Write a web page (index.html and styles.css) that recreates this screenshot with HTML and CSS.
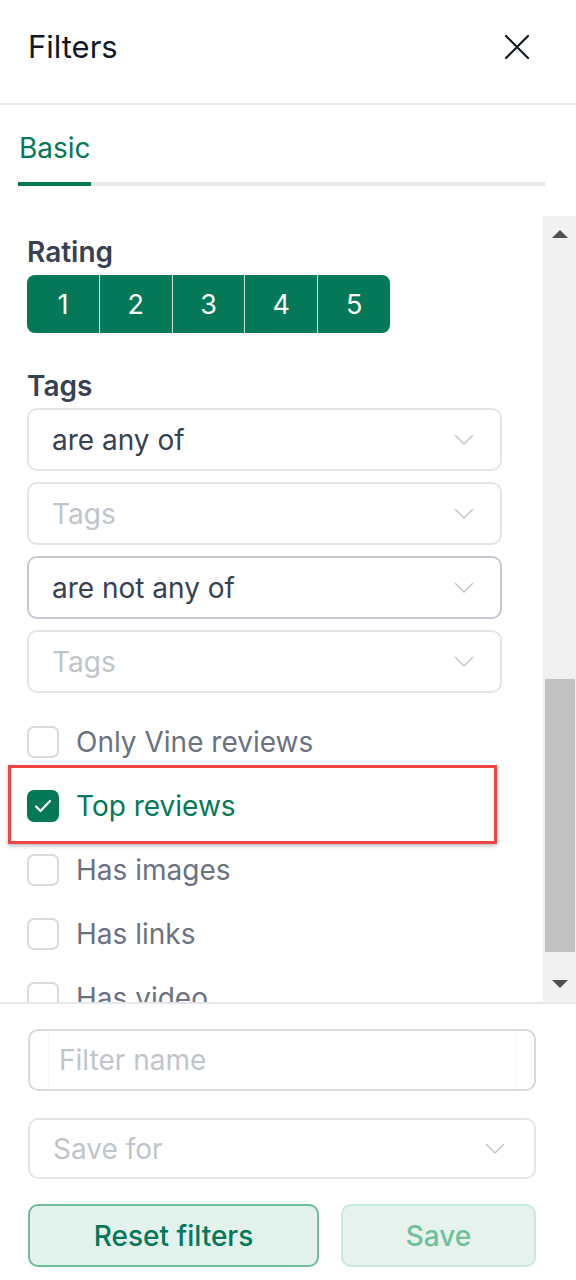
FILE: index.html
```html
<!DOCTYPE html>
<html lang="en">
<head>
<meta charset="utf-8">
<title>Filters</title>
<link rel="stylesheet" href="styles.css">
</head>
<body>
<div class="panel">
  <header class="header">
    <h1 class="title">Filters</h1>
    <svg class="close" width="26" height="26" viewBox="0 0 26 26"><path d="M2 2L24 24M24 2L2 24" stroke="#111827" stroke-width="2.2" fill="none" stroke-linecap="round"/></svg>
  </header>

  <nav class="tabs">
    <span class="tab">Basic</span>
  </nav>

  <div class="scroll-area">
    <div class="scroll-content">
      <div class="label">Rating</div>
      <div class="rating">
        <span class="rate">1</span><span class="rate">2</span><span class="rate">3</span><span class="rate">4</span><span class="rate">5</span>
      </div>

      <div class="label tags-label">Tags</div>
      <div class="selects">
        <div class="select"><span>are any of</span><svg class="chev" width="20" height="11" viewBox="0 0 20 11"><path d="M1 1L10 10L19 1" stroke="#c3c7cf" stroke-width="1.5" fill="none"/></svg></div>
        <div class="select placeholder"><span>Tags</span><svg class="chev" width="20" height="11" viewBox="0 0 20 11"><path d="M1 1L10 10L19 1" stroke="#c3c7cf" stroke-width="1.5" fill="none"/></svg></div>
        <div class="select active"><span>are not any of</span><svg class="chev" width="20" height="11" viewBox="0 0 20 11"><path d="M1 1L10 10L19 1" stroke="#c3c7cf" stroke-width="1.5" fill="none"/></svg></div>
        <div class="select placeholder"><span>Tags</span><svg class="chev" width="20" height="11" viewBox="0 0 20 11"><path d="M1 1L10 10L19 1" stroke="#c3c7cf" stroke-width="1.5" fill="none"/></svg></div>
      </div>

      <div class="checks">
        <div class="check"><span class="box"></span><span class="check-label">Only Vine reviews</span></div>
        <div class="check checked">
          <span class="box"><svg width="18" height="14" viewBox="0 0 18 14"><path d="M2 7.5L6.5 12L16 2" stroke="#fff" stroke-width="2.2" fill="none" stroke-linecap="round" stroke-linejoin="round"/></svg></span>
          <span class="check-label">Top reviews</span>
          <span class="highlight"></span>
        </div>
        <div class="check"><span class="box"></span><span class="check-label">Has images</span></div>
        <div class="check"><span class="box"></span><span class="check-label">Has links</span></div>
        <div class="check"><span class="box"></span><span class="check-label">Has video</span></div>
      </div>
    </div>
    <div class="scrollbar">
      <span class="arrow up"></span>
      <span class="track"><span class="thumb"></span></span>
      <span class="arrow down"></span>
    </div>
  </div>

  <footer class="footer">
    <div class="input"><span class="input-inner">Filter name</span></div>
    <div class="select placeholder save-for"><span>Save for</span><svg class="chev" width="20" height="11" viewBox="0 0 20 11"><path d="M1 1L10 10L19 1" stroke="#c3c7cf" stroke-width="1.5" fill="none"/></svg></div>
    <div class="buttons">
      <button class="btn reset">Reset filters</button>
      <button class="btn save">Save</button>
    </div>
  </footer>
</div>
</body>
</html>
```

FILE: styles.css
```css
* { box-sizing: border-box; }
html, body { margin: 0; padding: 0; background: #fff; }
body { font-family: Inter, "Noto Sans", "Liberation Sans", sans-serif; }

.panel { width: 576px; height: 1280px; background: #fff; overflow: hidden; }

.header {
  height: 105px;
  padding: 0 46px 10px 28px;
  display: flex;
  align-items: center;
  justify-content: space-between;
  border-bottom: 2px solid #e5e7eb;
}
.title { margin: 0; font-size: 31px; font-weight: 400; color: #111827; line-height: 38px; }
.close { display: block; }

.tabs {
  margin: 27px 31px 0 18px;
  height: 54px;
  border-bottom: 4px solid #e5e7eb;
  display: flex;
  align-items: flex-end;
}
.tab {
  font-size: 28px;
  color: #047857;
  padding: 0 1px 17px 1px;
  width: 73px;
  border-bottom: 4px solid #047857;
  margin-bottom: -4px;
  line-height: 34px;
}

.scroll-area {
  margin-top: 30px;
  height: 786px;
  display: flex;
}
.scroll-content {
  flex: 1;
  overflow: hidden;
  padding: 19px 0 0 27px;
}
.label {
  font-size: 28px;
  font-weight: 600;
  color: #374151;
  line-height: 34px;
}
.rating {
  margin-top: 6px;
  display: flex;
  width: 363px;
  height: 58px;
  border-radius: 8px;
  overflow: hidden;
  background: #047857;
}
.rate {
  flex: 1;
  display: flex;
  align-items: center;
  justify-content: center;
  color: #fff;
  font-size: 27px;
  border-left: 1.5px solid #cfe0d8;
}
.rate:first-child { border-left: none; }

.tags-label { margin-top: 36px; }
.selects { margin-top: 5px; display: flex; flex-direction: column; gap: 11px; width: 475px; }
.select {
  height: 63px;
  border: 2px solid #e3e5ea;
  border-radius: 10px;
  display: flex;
  align-items: center;
  justify-content: space-between;
  padding: 0 26px 0 23px;
  font-size: 28px;
  color: #374151;
}
.select.active { border-color: #c4c8d0; }
.select.placeholder { color: #c0c5cd; }
.chev { display: block; }

.checks { margin-top: 17px; }
.check {
  position: relative;
  height: 64px;
  display: flex;
  align-items: center;
  gap: 17px;
}
.box {
  width: 32px;
  height: 32px;
  border: 2px solid #d8dbe0;
  border-radius: 7px;
  display: flex;
  align-items: center;
  justify-content: center;
}
.check-label { font-size: 28px; color: #6b7280; }
.check.checked .box { background: #047857; border-color: #047857; }
.check.checked .check-label { color: #047857; }
.highlight {
  position: absolute;
  left: -19px;
  top: -9px;
  width: 489px;
  height: 79px;
  border: 3px solid #ef4444;
  box-shadow: 0 2px 4px rgba(0, 0, 0, 0.25);
  pointer-events: none;
}

.scrollbar {
  width: 33px;
  background: #f1f1f1;
  display: flex;
  flex-direction: column;
  align-items: center;
}
.arrow { width: 0; height: 0; border-left: 8px solid transparent; border-right: 8px solid transparent; }
.arrow.up { margin-top: 14px; border-bottom: 8px solid #505050; }
.arrow.down { margin-bottom: 14px; border-top: 8px solid #505050; }
.track { flex: 1; width: 100%; position: relative; display: flex; flex-direction: column; justify-content: flex-end; padding: 0 1px 28px 2px; }
.thumb { display: block; height: 273px; background: #c1c1c1; }

.footer {
  border-top: 2px solid #e5e7eb;
  padding: 25px 40px 0 28px;
}
.input {
  height: 62px;
  border: 2px solid #d6d9df;
  border-radius: 10px;
  display: flex;
  align-items: center;
  padding: 0 18px;
}
.input-inner {
  flex: 1;
  height: 100%;
  display: flex;
  align-items: center;
  padding-left: 10px;
  font-size: 28px;
  color: #c0c5cd;
  border-left: 1px solid #f5f6f7;
  border-right: 1px solid #f5f6f7;
}
.save-for { margin-top: 27px; height: 61px; padding-right: 29px; }
.buttons { margin-top: 25px; display: flex; gap: 22px; }
.btn {
  height: 63px;
  border-radius: 10px;
  font-family: inherit;
  font-size: 28px;
  font-weight: 500;
}
.btn.reset {
  width: 291px;
  background: #e3f2ec;
  border: 2px solid #6dbd98;
  color: #047857;
}
.btn.save {
  flex: 1;
  background: #e5f2ed;
  border: 2px solid #cbe8dc;
  color: #72bf9c;
}
```
